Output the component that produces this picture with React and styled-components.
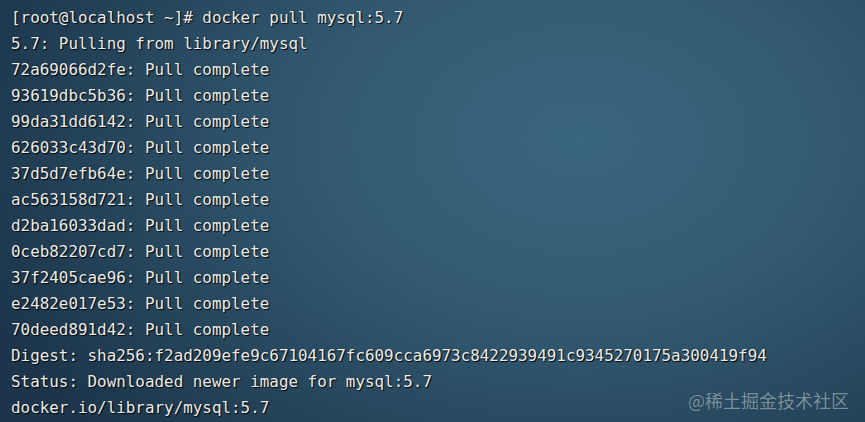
import React from "react";
import styled, { createGlobalStyle } from "styled-components";

const GlobalStyle = createGlobalStyle`
    html, body {
        margin: 0;
        padding: 0;
    }
`;

const Screen = styled.div`
    position: relative;
    width: 865px;
    height: 422px;
    overflow: hidden;
    background: radial-gradient(ellipse 640px 440px at 580px 140px, #3a6580 0%, #335a71 40%, #26465c 72%, #1c354a 100%);
    box-sizing: border-box;
    padding: 5px 0 0 11px;
`;

const Output = styled.pre`
    margin: 0;
    font-family: "DejaVu Sans Mono", monospace;
    font-size: 15.9px;
    line-height: 26px;
    color: #eceeee;
    text-shadow: 1px 1px 1px rgba(0, 0, 0, 0.95), 0 0 1px rgba(0, 0, 0, 0.5);
`;

const Line = styled.div`
    height: 26px;
    white-space: pre;
`;

const Watermark = styled.div`
    position: absolute;
    right: 16px;
    bottom: 9px;
    font-family: "Noto Sans CJK SC", "Noto Sans", sans-serif;
    font-size: 18px;
    color: rgba(190, 205, 215, 0.6);
    text-shadow: 0 0 1px rgba(0, 0, 0, 0.3);
`;

const lines = [
    "[root@localhost ~]# docker pull mysql:5.7",
    "5.7: Pulling from library/mysql",
    "72a69066d2fe: Pull complete",
    "93619dbc5b36: Pull complete",
    "99da31dd6142: Pull complete",
    "626033c43d70: Pull complete",
    "37d5d7efb64e: Pull complete",
    "ac563158d721: Pull complete",
    "d2ba16033dad: Pull complete",
    "0ceb82207cd7: Pull complete",
    "37f2405cae96: Pull complete",
    "e2482e017e53: Pull complete",
    "70deed891d42: Pull complete",
    "Digest: sha256:f2ad209efe9c67104167fc609cca6973c8422939491c9345270175a300419f94",
    "Status: Downloaded newer image for mysql:5.7",
    "docker.io/library/mysql:5.7"
];

const App = () => (
    <>
        <GlobalStyle />
        <Screen>
            <Output>
                {lines.map((text, index) => <Line key={index}>{text}</Line>)}
            </Output>
            <Watermark>@稀土掘金技术社区</Watermark>
        </Screen>
    </>
);

export default App;
